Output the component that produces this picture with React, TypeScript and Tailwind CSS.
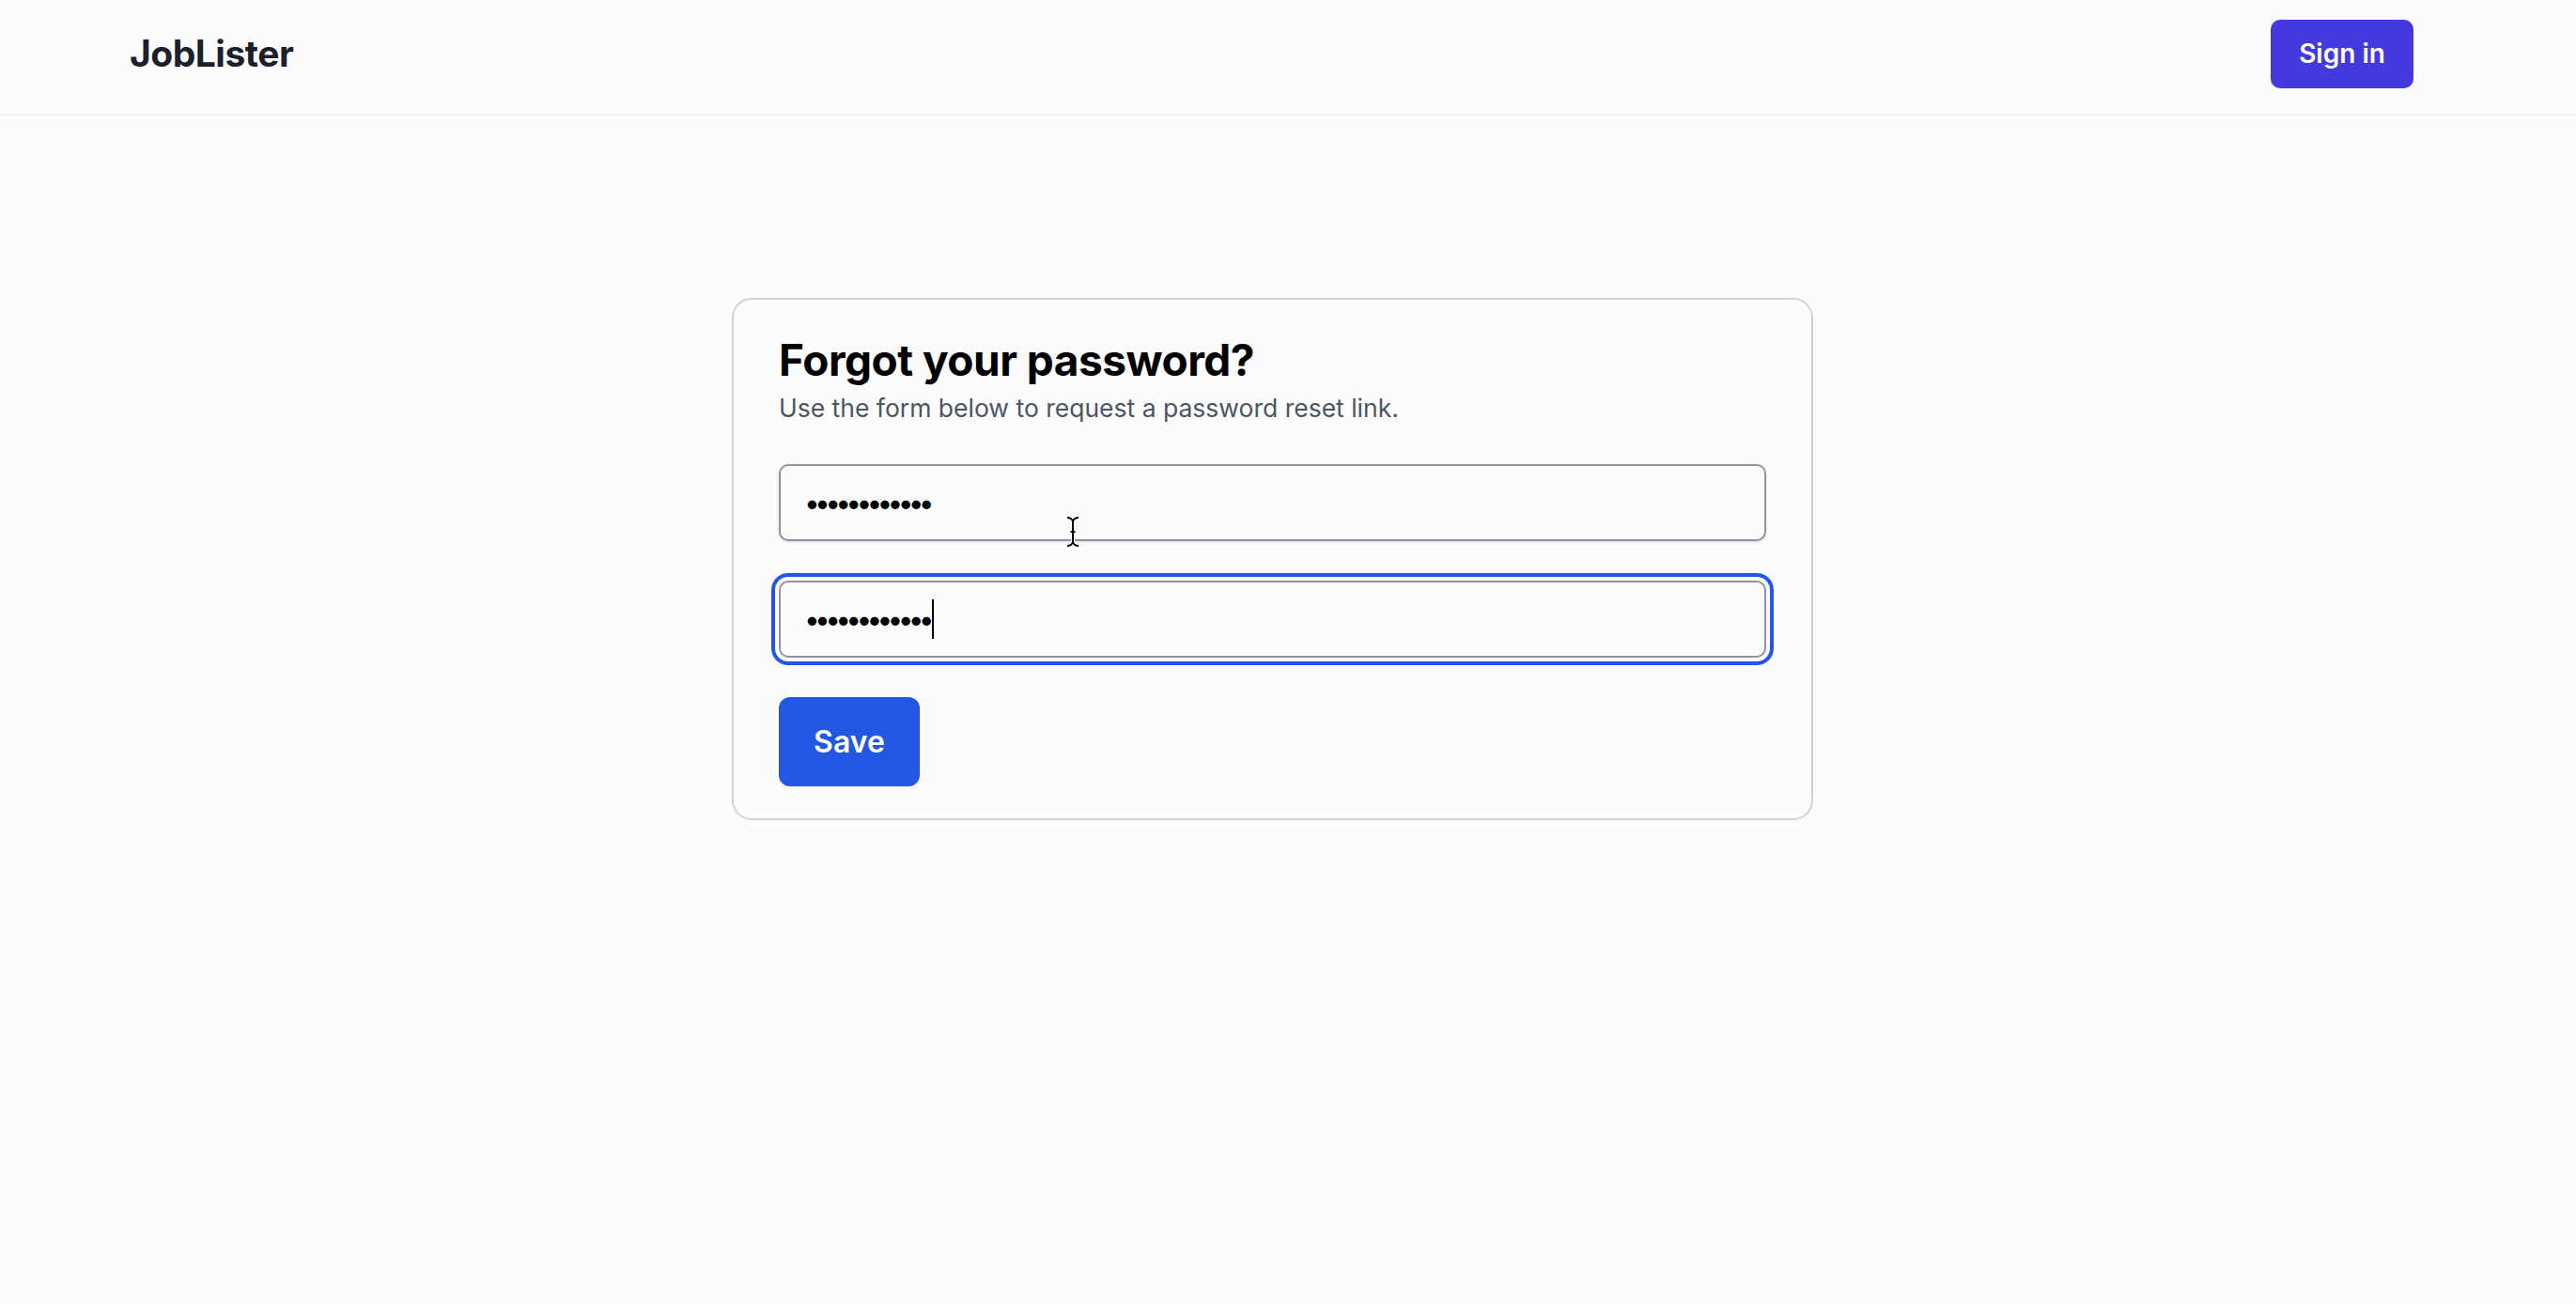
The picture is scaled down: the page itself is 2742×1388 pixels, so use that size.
import React from "react";

function IBeam() {
  return (
    <svg width="18" height="34" viewBox="0 0 18 34" className="absolute left-[1133px] top-[549px] pointer-events-none">
      <path d="M3 2 C6 2 8 3 9 6 C10 3 12 2 15 2" fill="none" stroke="#fff" strokeWidth="4" />
      <path d="M3 32 C6 32 8 31 9 28 C10 31 12 32 15 32" fill="none" stroke="#fff" strokeWidth="4" />
      <path d="M9 6 V28" stroke="#fff" strokeWidth="4" />
      <path d="M3 2 C6 2 8 3 9 6 C10 3 12 2 15 2" fill="none" stroke="#000" strokeWidth="2" />
      <path d="M3 32 C6 32 8 31 9 28 C10 31 12 32 15 32" fill="none" stroke="#000" strokeWidth="2" />
      <path d="M9 6 V28" stroke="#000" strokeWidth="2" />
      <path d="M6.5 17 H11.5" stroke="#000" strokeWidth="2" />
    </svg>
  );
}

export default function App() {
  return (
    <div className="relative min-h-screen bg-[#fcfcfd] font-['Inter',sans-serif] text-black">
      <header className="h-[123px] border-b-2 border-[#eeeeee] flex items-center justify-between pl-[138px] pr-[173px] pb-[7px]">
        <div className="text-[39px] font-bold text-[#1a202c] tracking-[-0.5px]">JobLister</div>
        <button className="w-[152px] h-[73px] rounded-[10px] bg-[#4439de] text-white text-[28px] font-semibold">
          Sign in
        </button>
      </header>
      <main className="pt-[194px]">
        <div className="ml-[779px] w-[1151px] border-2 border-[#d1d1d6] rounded-[21px] px-[48px] pt-[35px] pb-[34px]">
          <h1 className="text-[46px] leading-[59px] font-bold tracking-[-0.5px]">Forgot your password?</h1>
          <p className="mt-[3px] text-[26.5px] leading-[36px] text-[#4b5563]">
            Use the form below to request a password reset link.
          </p>
          <div className="mt-[42px] flex flex-col gap-[42px]">
            <input
              type="password"
              readOnly
              value="password1234"
              className="h-[82px] w-full rounded-[10px] border-2 border-[#8e95a0] bg-[#fcfcfd] px-[25px] text-[30px] tracking-[-5.8px] shadow-sm outline-none"
            />
            <div className="relative">
              <input
                type="password"
                readOnly
                value="password1234"
                className="h-[82px] w-full rounded-[10px] border-2 border-[#8e95a0] bg-[#fcfcfd] px-[25px] text-[30px] tracking-[-5.8px] outline-none ring-4 ring-[#2157e3] ring-offset-4 ring-offset-[#fcfcfd]"
              />
              <span className="absolute left-[163px] top-[20px] h-[42px] w-[2px] bg-black" />
            </div>
            <div>
              <button className="w-[150px] h-[95px] rounded-[12px] bg-[#2157e3] text-white text-[32px] font-semibold">
                Save
              </button>
            </div>
          </div>
        </div>
      </main>
      <IBeam />
    </div>
  );
}
